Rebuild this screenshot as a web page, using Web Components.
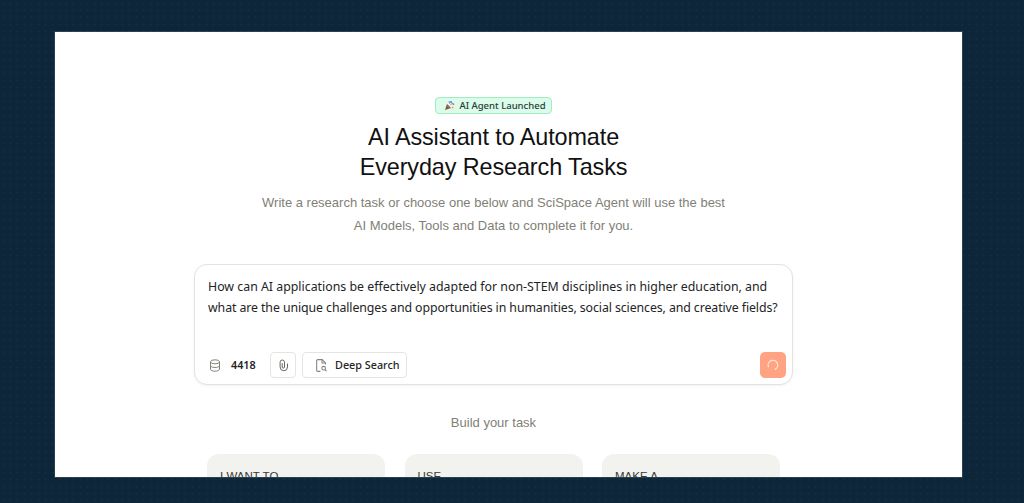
<!DOCTYPE html>
<html lang="en">
<head>
<meta charset="utf-8">
<title>SciSpace Agent</title>
<style>
  html, body { margin: 0; height: 100%; overflow: hidden; background: #0d2639; }
  .tight { letter-spacing: -.095px; }
</style>
</head>
<body>
<app-frame>
  <agent-hero></agent-hero>
  <task-composer credits="4418">How can AI applications be effectively adapted for non-STEM disciplines in higher education, and<br><span class="tight">what are the unique challenges and opportunities in humanities, social sciences, and creative fields?</span></task-composer>
  <task-builder></task-builder>
</app-frame>

<script>
customElements.define(
  'app-frame',
  class AppFrame extends HTMLElement {
    constructor() {
      super()
      this.attachShadow({ mode: 'open' })
      this.shadowRoot.innerHTML = `
      <style>
        :host {
          display: block;
          box-sizing: border-box;
          height: 503px;
          padding: 32px 62px 26px 55px;
          background-color: #0d2639;
          background-image: radial-gradient(circle, rgba(120, 170, 200, .04) 0 1px, transparent 1.2px);
          background-size: 7px 7px;
        }
        .frame {
          height: 445px;
          overflow: hidden;
          background: #fff;
          box-shadow: 0 0 0 1px rgba(255, 255, 255, .12);
          display: flex;
          flex-direction: column;
          align-items: center;
          padding: 65px 30px 0 0;
          box-sizing: border-box;
        }
        ::slotted(*) { flex-shrink: 0; }
      </style>
      <div class="frame"><slot></slot></div>
`
    }
  }
)

customElements.define(
  'agent-hero',
  class AgentHero extends HTMLElement {
    constructor() {
      super()
      this.attachShadow({ mode: 'open' })
      this.shadowRoot.innerHTML = `
      <style>
        :host {
          display: flex;
          flex-direction: column;
          align-items: center;
          font-family: "Liberation Sans", Arial, sans-serif;
          text-align: center;
        }
        .badge {
          display: flex;
          align-items: center;
          gap: 4px;
          box-sizing: border-box;
          height: 17px;
          padding: 0 5px 0 8px;
          border: 1px solid #9fedc4;
          border-radius: 4px;
          background: #dcfbe9;
          color: #24403a;
          font: 500 9.5px/1 "Noto Sans", sans-serif;
        }
        .badge svg { display: block; }
        h1 {
          margin: 8px 0 0;
          font-size: 23.4px;
          line-height: 30px;
          font-weight: 400;
          letter-spacing: -.1px;
          color: #111;
        }
        p {
          margin: 9px 0 1px;
          font-size: 13px;
          line-height: 23px;
          color: #7f7f76;
        }
      </style>
      <div class="badge">
        <svg width="11" height="11" viewBox="0 0 11 11">
          <path d="M1 10 3 4l4 4z" fill="#7a5a3c"/>
          <path d="M3.6 4.6 6.4 7.4 5 8 3 6z" fill="#d9534f"/>
          <circle cx="7" cy="2" r="1" fill="#4f7fd0"/>
          <circle cx="9.4" cy="4.2" r=".9" fill="#d9609a"/>
          <circle cx="8.6" cy="7.6" r=".9" fill="#e3a13a"/>
          <path d="M5 1.2 5.6 3.6M6.6 4.6 9 3" stroke="#5a6fb5" stroke-width=".8" fill="none"/>
        </svg>
        <span>AI Agent Launched</span>
      </div>
      <h1>AI Assistant to Automate<br>Everyday Research Tasks</h1>
      <p>Write a research task or choose one below and SciSpace Agent will use the best<br>AI Models, Tools and Data to complete it for you.</p>
`
    }
  }
)

customElements.define(
  'task-composer',
  class TaskComposer extends HTMLElement {
    constructor() {
      super()
      this.attachShadow({ mode: 'open' })
      const credits = this.getAttribute('credits')
      this.shadowRoot.innerHTML = `
      <style>
        :host {
          display: flex;
          flex-direction: column;
          box-sizing: border-box;
          width: 599px;
          height: 121px;
          margin-top: 26px;
          padding: 11px 6px 6px 13px;
          border: 1px solid #e2e2de;
          border-radius: 13px;
          background: #fff;
          box-shadow: 0 1px 3px rgba(0, 0, 0, .05);
          font-family: "Noto Sans", sans-serif;
          color: #24241f;
        }
        .text {
          flex: 1;
          margin-right: -4px;
          font-size: 12.35px;
          line-height: 21px;
        }
        .bar {
          display: flex;
          align-items: center;
          height: 26px;
          font-size: 10.8px;
          font-weight: 500;
        }
        .db { margin-left: 1px; }
        .credits { margin-left: 10px; width: 39px; font-weight: 600; }
        .credits, .deep span { padding-bottom: 2px; }
        button {
          display: flex;
          align-items: center;
          justify-content: center;
          box-sizing: border-box;
          height: 26px;
          padding: 0;
          border: 1px solid #e4e4e0;
          border-radius: 4px;
          background: #fff;
          color: inherit;
          font: inherit;
        }
        .attach { width: 26px; }
        .deep {
          margin-left: 6px;
          width: 105px;
          gap: 7px;
          justify-content: flex-start;
          padding-left: 12px;
        }
        .send {
          margin-left: auto;
          width: 26px;
          border: 0;
          border-radius: 5px;
          background: #ffa382;
        }
        svg { display: block; fill: none; }
      </style>
      <div class="text"><slot></slot></div>
      <div class="bar">
        <svg class="db" width="12" height="13" viewBox="0 0 12 13" stroke="#85857e" stroke-width="1">
          <ellipse cx="6" cy="2.8" rx="4.5" ry="2"/>
          <path d="M1.5 2.8v7.4c0 1.1 2 2 4.5 2s4.5-.9 4.5-2V2.8M1.5 6.5c0 1.1 2 2 4.5 2s4.5-.9 4.5-2"/>
        </svg>
        <span class="credits">${credits}</span>
        <button class="attach" aria-label="Attach">
          <svg width="13" height="13" viewBox="0 0 13 13" stroke="#66665f" stroke-width="1" stroke-linecap="round">
            <path d="M5.2 4.5V8a1.15 1.15 0 0 0 2.3 0V3.2a2.2 2.2 0 0 0-4.4 0V8a3.7 3.7 0 0 0 7.4 0V5"/>
          </svg>
        </button>
        <button class="deep">
          <svg width="13" height="15" viewBox="0 0 12 14" stroke="#85857e" stroke-width="1" stroke-linejoin="round">
            <path d="M5 12.5H2.5a1 1 0 0 1-1-1v-9a1 1 0 0 1 1-1h4.2l3 3V6"/>
            <path d="M6.5 1.5v3.2h3.2"/>
            <circle cx="8" cy="9.5" r="1.7"/>
            <path d="m9.3 10.8 1.4 1.4"/>
          </svg>
          <span>Deep Search</span>
        </button>
        <button class="send" aria-label="Send">
          <svg width="12" height="12" viewBox="0 0 12 12" stroke="#fbe6dc" stroke-width="1.2" stroke-linecap="round">
            <path d="M1.4 7.8A4.8 4.8 0 1 1 8 10.4"/>
          </svg>
        </button>
      </div>
`
    }
  }
)

customElements.define(
  'task-card',
  class TaskCard extends HTMLElement {
    constructor() {
      super()
      this.attachShadow({ mode: 'open' })
      this.shadowRoot.innerHTML = `
      <style>
        :host {
          display: block;
          box-sizing: border-box;
          width: 178px;
          height: 80px;
          padding: 15px 13px;
          border-radius: 12px;
          background: #f2f2ee;
          color: #3a3a35;
          font: 11.5px/14px "Liberation Sans", Arial, sans-serif;
        }
      </style>
      <slot></slot>
`
    }
  }
)

customElements.define(
  'task-builder',
  class TaskBuilder extends HTMLElement {
    constructor() {
      super()
      this.attachShadow({ mode: 'open' })
      this.shadowRoot.innerHTML = `
      <style>
        :host {
          display: flex;
          flex-direction: column;
          align-items: center;
          margin-top: 29px;
        }
        h2 {
          margin: 0;
          font: 400 13px/17px "Liberation Sans", Arial, sans-serif;
          color: #7f7f76;
        }
        .cards {
          display: flex;
          gap: 19.5px;
          margin-top: 23px;
        }
      </style>
      <h2>Build your task</h2>
      <div class="cards">
        <task-card>I WANT TO</task-card>
        <task-card>USE</task-card>
        <task-card>MAKE A</task-card>
      </div>
`
    }
  }
)
</script>
</body>
</html>
